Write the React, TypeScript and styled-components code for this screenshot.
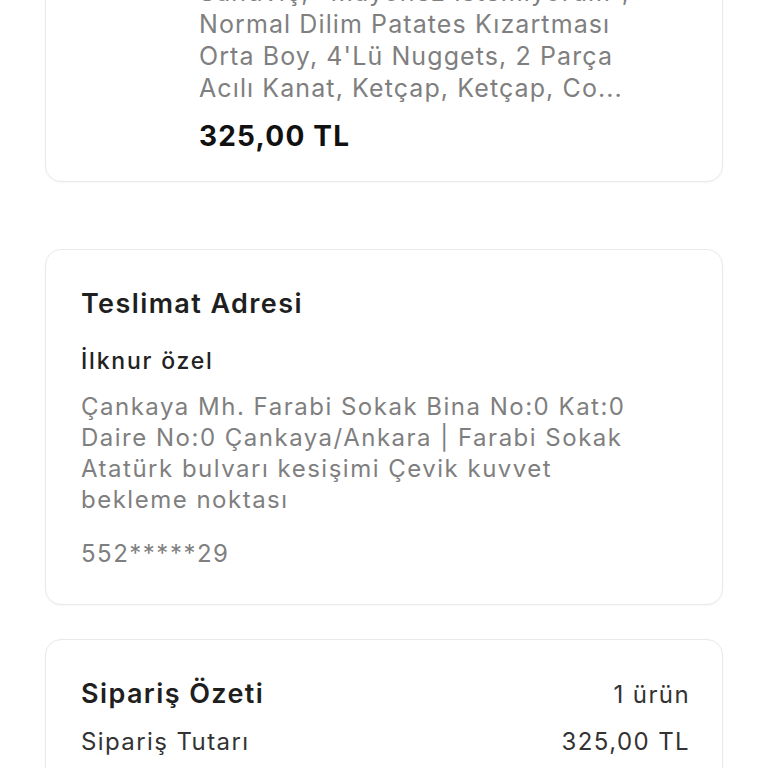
import React from 'react';
import styled, { createGlobalStyle } from 'styled-components';

const GlobalStyle = createGlobalStyle`
  html, body {
    margin: 0;
    padding: 0;
    background: #ffffff;
  }
  body {
    font-family: Inter, "Noto Sans", "Liberation Sans", sans-serif;
    color: #1f1f1f;
    -webkit-font-smoothing: antialiased;
  }
`;

const Page = styled.div`
  display: flex;
  flex-direction: column;
  width: 768px;
  margin-top: -136px;
  padding: 0 45px;
  box-sizing: border-box;
`;

const Card = styled.section<{ $gap?: number }>`
  display: flex;
  flex-direction: column;
  margin-top: ${(p) => p.$gap ?? 0}px;
  padding: 36px 34px 35px 35px;
  border: 1px solid #e9e9e9;
  border-radius: 16px;
  background: #ffffff;
  box-shadow: 0 1px 2px rgba(0, 0, 0, 0.03);
`;

const ItemCard = styled(Card)`
  flex-direction: row;
  gap: 18px;
  padding: 35px 34px 27px 35px;
`;

const Thumb = styled.div`
  flex: 0 0 100px;
  width: 100px;
  height: 100px;
  border-radius: 12px;
  background: #f4f4f4;
`;

const ItemInfo = styled.div`
  display: flex;
  flex-direction: column;
`;

const ItemName = styled.div`
  font-size: 25px;
  font-weight: 600;
  line-height: 36px;
  letter-spacing: 1.4px;
  margin-bottom: 8px;
`;

const Desc = styled.div`
  font-size: 25px;
  line-height: 32px;
  letter-spacing: 1.1px;
  color: #7f7f7f;
`;

const Line = styled.div`
  white-space: nowrap;
`;

const Price = styled.div`
  margin-top: 14px;
  font-size: 28px;
  font-weight: 700;
  line-height: 36px;
  letter-spacing: 1.2px;
  color: #111111;
`;

const Title = styled.h2`
  margin: 0;
  font-size: 27px;
  font-weight: 600;
  line-height: 36px;
  letter-spacing: 1.4px;
  color: #1f1f1f;
`;

const Name = styled.div`
  margin-top: 23px;
  font-size: 23px;
  font-weight: 500;
  line-height: 32px;
  letter-spacing: 1.8px;
  color: #222222;
`;

const Address = styled.div`
  margin-top: 14px;
  font-size: 24px;
  line-height: 31px;
  letter-spacing: 1.5px;
  color: #7f7f7f;
`;

const Phone = styled.div`
  margin-top: 23px;
  font-size: 24px;
  line-height: 31px;
  letter-spacing: 1.5px;
  color: #7f7f7f;
`;

const Row = styled.div<{ $gap?: number }>`
  display: flex;
  align-items: center;
  justify-content: space-between;
  margin-top: ${(p) => p.$gap ?? 0}px;
`;

const RowText = styled.span`
  font-size: 24px;
  line-height: 31px;
  letter-spacing: 1.4px;
  color: #333333;
`;

const RowValue = styled(RowText)`
  margin-right: -2px;
`;

const descLines = [
  'Big King Menü, Büyük Boy,',
  'Sandviç, "Mayonez İstemiyorum",',
  'Normal Dilim Patates Kızartması',
  "Orta Boy, 4'Lü Nuggets, 2 Parça",
  'Acılı Kanat, Ketçap, Ketçap, Co...',
];

const addressLines = [
  'Çankaya Mh. Farabi Sokak Bina No:0 Kat:0',
  'Daire No:0 Çankaya/Ankara | Farabi Sokak',
  'Atatürk bulvarı kesişimi Çevik kuvvet',
  'bekleme noktası',
];

const App: React.FC = () => {
  return (
    <>
      <GlobalStyle />
      <Page>
        <ItemCard>
          <Thumb />
          <ItemInfo>
            <ItemName>Big King Menü</ItemName>
            <Desc>
              {descLines.map((line) => (
                <Line key={line}>{line}</Line>
              ))}
            </Desc>
            <Price>325,00 TL</Price>
          </ItemInfo>
        </ItemCard>

        <Card $gap={67}>
          <Title>Teslimat Adresi</Title>
          <Name>İlknur özel</Name>
          <Address>
            {addressLines.map((line) => (
              <Line key={line}>{line}</Line>
            ))}
          </Address>
          <Phone>552*****29</Phone>
        </Card>

        <Card $gap={34}>
          <Row>
            <Title>Sipariş Özeti</Title>
            <RowValue>1 ürün</RowValue>
          </Row>
          <Row $gap={14}>
            <RowText>Sipariş Tutarı</RowText>
            <RowValue>325,00 TL</RowValue>
          </Row>
          <Row $gap={14}>
            <RowText>Teslimat Ücreti</RowText>
            <RowValue>0,00 TL</RowValue>
          </Row>
          <Row $gap={14}>
            <RowText>Toplam</RowText>
            <RowValue>325,00 TL</RowValue>
          </Row>
        </Card>
      </Page>
    </>
  );
};

export default App;
